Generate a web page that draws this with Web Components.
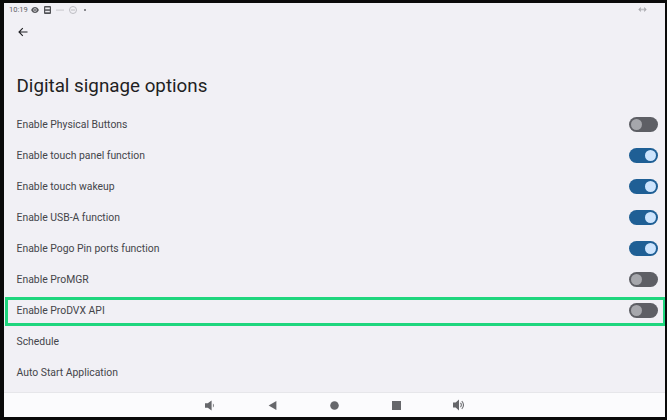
<!DOCTYPE html>
<html>
<head>
<meta charset="utf-8">
<title>Digital signage options</title>
<style>
  html, body { margin: 0; height: 100%; background: #000; overflow: hidden; }
</style>
</head>
<body>
<tablet-screen>
  <status-bar></status-bar>
  <settings-page heading="Digital signage options">
    <setting-row label="Enable Physical Buttons" toggle="off"></setting-row>
    <setting-row label="Enable touch panel function" toggle="on"></setting-row>
    <setting-row label="Enable touch wakeup" toggle="on"></setting-row>
    <setting-row label="Enable USB-A function" toggle="on"></setting-row>
    <setting-row label="Enable Pogo Pin ports function" toggle="on"></setting-row>
    <setting-row label="Enable ProMGR" toggle="off"></setting-row>
    <setting-row label="Enable ProDVX API" toggle="off" highlight></setting-row>
    <setting-row label="Schedule"></setting-row>
    <setting-row label="Auto Start Application"></setting-row>
  </settings-page>
  <nav-bar></nav-bar>
</tablet-screen>

<script>
class TabletScreen extends HTMLElement {
  constructor() {
    super();
    this.attachShadow({ mode: 'open' });
    this.shadowRoot.innerHTML = `
    <style>
      :host {
        display: flex;
        flex-direction: column;
        box-sizing: border-box;
        width: 667px;
        height: 420px;
        padding: 3px 2px 3px 4px;
        background: #0a0a0a;
        font-family: Roboto, "Liberation Sans", sans-serif;
      }
      .inner {
        flex: 1;
        display: flex;
        flex-direction: column;
        background: #f1f0f5;
        min-height: 0;
      }
    </style>
    <div class="inner"><slot></slot></div>
    `;
  }
}

class StatusBar extends HTMLElement {
  constructor() {
    super();
    this.attachShadow({ mode: 'open' });
    this.shadowRoot.innerHTML = `
    <style>
      :host {
        display: flex;
        align-items: center;
        height: 13px;
        padding: 0 18px 0 5px;
        color: #5f6064;
        font-size: 7.500px;
      }
      .icons { display: flex; align-items: center; gap: 5px; margin-left: 3px; }
      svg { display: block; }
      .right { margin-left: auto; }
    </style>
    <span>10:19</span>
    <div class="icons">
      <svg width="8" height="6" viewBox="0 0 9 7"><path fill="#55565a" d="M4.500 0C2.500 0 .9 1.400 0 3.500 .9 5.600 2.500 7 4.500 7S8.100 5.600 9 3.500C8.100 1.400 6.500 0 4.500 0z"/><circle cx="4.500" cy="3.500" r="1.900" fill="#f1f0f5"/><circle cx="4.500" cy="3.500" r="1.100" fill="#55565a"/></svg>
      <svg width="7" height="8" viewBox="0 0 7 8"><rect width="7" height="8" rx="1" fill="#505155"/><rect x="1.200" y="1.500" width="4.600" height="1.800" fill="#ecebf0"/><rect x="1.200" y="4.800" width="4.600" height="1.500" fill="#ecebf0"/></svg>
      <svg width="8" height="8" viewBox="0 0 8 8"><rect y="3.600" width="8" height="1" fill="#c9c9ce"/></svg>
      <svg width="8" height="8" viewBox="0 0 8 8"><circle cx="4" cy="4" r="3.500" fill="none" stroke="#bdbdc2"/><rect x="2" y="3.500" width="4" height="1" fill="#bdbdc2"/></svg>
      <svg width="6" height="6" viewBox="0 0 6 6"><circle cx="3" cy="3" r="1" fill="#66676b"/></svg>
    </div>
    <svg class="right" width="9" height="5" viewBox="0 0 10 6"><path fill="#a9a9ae" d="M0 3l3-3v6zM10 3L7 0v6z"/><rect x="3" y="2" width="4" height="2" fill="#c4c4c9"/></svg>
    `;
  }
}

class SettingsPage extends HTMLElement {
  constructor() {
    super();
    this.attachShadow({ mode: 'open' });
    this.shadowRoot.innerHTML = `
    <style>
      :host { display: flex; flex-direction: column; flex: 1; min-height: 0; overflow: hidden; }
      .back { height: 32px; padding-left: 14px; display: flex; align-items: center; }
      h1 {
        margin: 24px 0 0;
        padding-left: 12.500px;
        height: 29px;
        line-height: 29px;
        font-size: 18.800px;
        font-weight: 400;
        color: #1f1f23;
      }
      .list { display: flex; flex-direction: column; margin-top: 8px; }
    </style>
    <div class="back">
      <svg width="10" height="10" viewBox="0 0 10 10"><path fill="none" stroke="#202124" stroke-width="1.100" d="M9.500 5H1M4.800 1.200 1 5l3.800 3.800"/></svg>
    </div>
    <h1></h1>
    <div class="list"><slot></slot></div>
    `;
    this.shadowRoot.querySelector('h1').textContent = this.getAttribute('heading');
  }
}

class SettingRow extends HTMLElement {
  constructor() {
    super();
    this.attachShadow({ mode: 'open' });
    this.shadowRoot.innerHTML = `
    <style>
      :host {
        display: flex;
        align-items: center;
        justify-content: space-between;
        position: relative;
        height: 31px;
        padding: 0 7px 0 12.500px;
        font-size: 10.400px;
        color: #44454a;
      }
      .mark {
        position: absolute;
        left: 1px;
        right: -1px;
        top: 2px;
        height: 29px;
        box-sizing: border-box;
        border: 3px solid #1fd67e;
      }
    </style>
    <span class="label"></span>
    <slot name="end"></slot>
    `;
    this.shadowRoot.querySelector('.label').textContent = this.getAttribute('label');
    if (this.hasAttribute('toggle')) {
      const sw = document.createElement('toggle-switch');
      if (this.getAttribute('toggle') === 'on') sw.setAttribute('checked', '');
      sw.slot = 'end';
      this.appendChild(sw);
    }
    if (this.hasAttribute('highlight')) {
      const mark = document.createElement('div');
      mark.className = 'mark';
      this.shadowRoot.appendChild(mark);
    }
  }
}

class ToggleSwitch extends HTMLElement {
  constructor() {
    super();
    this.attachShadow({ mode: 'open' });
    this.shadowRoot.innerHTML = `
    <style>
      :host {
        display: flex;
        align-items: center;
        box-sizing: border-box;
        width: 29px;
        height: 15px;
        padding: 0 2px;
        border-radius: 8px;
        background: #5e5f65;
      }
      .knob { width: 11px; height: 11px; border-radius: 50%; background: #a6a7ac; }
      :host([checked]) { background: #1f5f95; justify-content: flex-end; }
      :host([checked]) .knob { background: #cde4fd; }
    </style>
    <div class="knob"></div>
    `;
  }
}

class NavBar extends HTMLElement {
  constructor() {
    super();
    this.attachShadow({ mode: 'open' });
    this.shadowRoot.innerHTML = `
    <style>
      :host {
        display: grid;
        grid-template-columns: repeat(5, 62px);
        justify-content: center;
        align-items: center;
        justify-items: center;
        height: 25px;
        background: #fbfbfd;
        border-top: 1px solid #e6e6ea;
        box-sizing: border-box;
      }
      svg { display: block; }
    </style>
    <svg width="11" height="11" viewBox="0 0 10 10"><path fill="#66676b" d="M0 3h2.500L6 .5v9L2.500 7H0zM7.200 3.200C8.300 3.700 8.300 6.300 7.200 6.800z"/></svg>
    <svg width="9" height="11" viewBox="0 0 8 10"><path fill="#66676b" d="M7.500 1v8L.5 5z"/></svg>
    <svg width="9" height="9" viewBox="0 0 8 8"><circle cx="4" cy="4" r="3.800" fill="#66676b"/></svg>
    <svg width="9" height="9" viewBox="0 0 8 8"><rect width="8" height="8" fill="#66676b"/></svg>
    <svg width="12" height="12" viewBox="0 0 10 10"><path fill="#66676b" d="M0 3h2.200L5 .5v9L2.200 7H0z"/><path fill="none" stroke="#66676b" stroke-width=".9" d="M6.200 3.300c1 .9 1 2.500 0 3.400M7.300 1.800c1.900 1.700 1.900 4.700 0 6.400"/></svg>
    `;
  }
}

customElements.define('tablet-screen', TabletScreen);
customElements.define('status-bar', StatusBar);
customElements.define('settings-page', SettingsPage);
customElements.define('setting-row', SettingRow);
customElements.define('toggle-switch', ToggleSwitch);
customElements.define('nav-bar', NavBar);
</script>
</body>
</html>
